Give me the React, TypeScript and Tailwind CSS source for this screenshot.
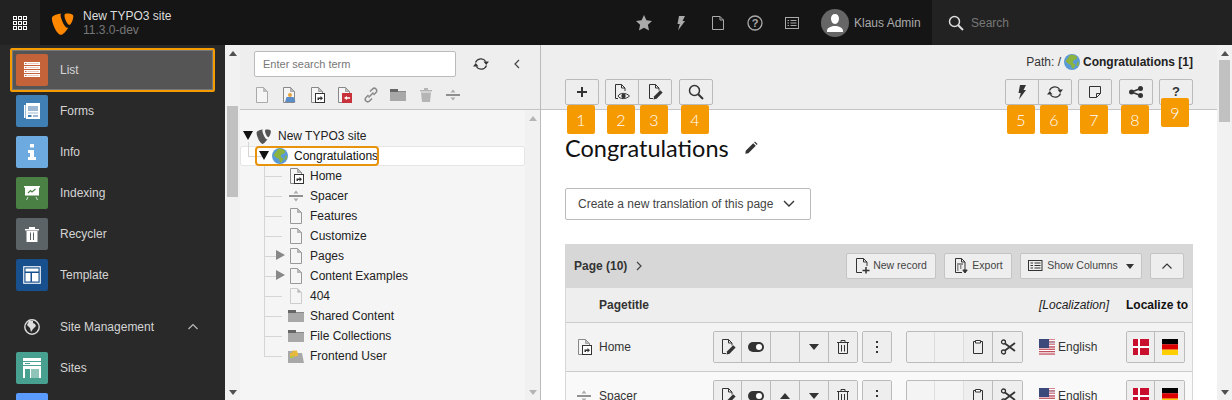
import React from "react";

const Doc = ({ c = "#888", fill = "#f5f5f5", children }: { c?: string; fill?: string; children?: React.ReactNode }) => (
  <svg width="16" height="16" viewBox="0 0 16 16" className="shrink-0">
    <path d="M2.500.5h7l4 4v11h-11z" fill={fill} stroke={c} />
    <path d="M9.500.5v4h4z" fill="#bbb" stroke={c} strokeWidth=".6" />
    {children}
  </svg>
);
const Shortcut = () => (
  <>
    <rect x="6.500" y="6.500" width="9" height="9" fill="#fff" stroke="#333" />
    <path d="M8.500 13v-2.500h3V9l2.500 2.200-2.500 2.200V12H10v1z" fill="#333" />
  </>
);
const Folder = ({ c = "#a8a8a8" }: { c?: string }) => (
  <svg width="16" height="16" viewBox="0 0 16 16" className="shrink-0">
    <path d="M0 4h16v10H0z" fill={c} />
    <path d="M0 2h8v1h0v2H0z" fill="#666" />
    <path d="M8 4h8v1H8z" fill="#8a8a8a" />
  </svg>
);
const Spacer = ({ c = "#666" }: { c?: string }) => (
  <svg width="16" height="16" viewBox="0 0 16 16" className="shrink-0">
    <path d="M1 8h14" stroke={c} strokeWidth="1.400" />
    <path d="M8 2.500l2.400 3H5.600zM8 13.500l2.400-3H5.600z" fill="#aaa" />
  </svg>
);
const Trash = ({ c = "#333", s = 16 }: { c?: string; s?: number }) => (
  <svg width={s} height={s} viewBox="0 0 16 16" fill="none" stroke={c}>
    <path d="M2 3.500h12M6 3.500v-2h4v2M3.500 3.500v11h9v-11M6.500 6v6.500M9.500 6v6.500" />
  </svg>
);
const Globe = () => (
  <svg width="16" height="16" viewBox="0 0 16 16" className="shrink-0">
    <circle cx="8" cy="8" r="8" fill="#5b9bd5" />
    <path d="M6 1C9 0 12 1.500 13.500 3.500l-1.500 2-2 .5-1.500 2 1.500 2 1.500.5-1.500 3.500-2 .5-1-3.500-2-1L3.500 9 1.500 7 4 4z" fill="#8db33f" />
    <path d="M13.500 7.500l1.500.5-.5 3.500-2 .5z" fill="#8db33f" />
  </svg>
);
const T3 = ({ c, s }: { c: string; s: number }) => (
  <svg width={s} height={s} viewBox="0 0 16 16" className="shrink-0">
    <path fill={c} d="M11.500 11.100c-.2.100-.4.100-.6.100-1.800 0-4.500-6.300-4.500-8.400 0-.8.200-1 .4-1.200C4.700 1.800 1.800 2.700.9 3.800c-.2.300-.3.700-.3 1.300 0 3.300 3.500 10.800 6 10.800 1.100 0 3.100-1.800 4.900-4.800M10.300 1.600c2.300 0 4.600.4 4.600 1.700 0 2.700-1.700 5.900-2.500 5.900-1.500 0-3.400-4.100-3.400-6.100 0-.9.300-1.500 1.300-1.500" />
  </svg>
);
const Tri = ({ d, c = "#555" }: { d: "up" | "down" | "right"; c?: string }) => {
  if (d === "up") return <svg width="8" height="5" viewBox="0 0 8 5"><path d="M4 0l4 5H0z" fill={c} /></svg>;
  if (d === "down") return <svg width="8" height="5" viewBox="0 0 8 5"><path d="M0 0h8L4 5z" fill={c} /></svg>;
  return <svg width="9" height="10" viewBox="0 0 9 10"><path d="M0 0l9 5-9 5z" fill={c} /></svg>;
};

const ModuleIcons: Record<string, React.ReactNode> = {
  List: (
    <svg width="16" height="16" viewBox="0 0 16 16">
      <path d="M0 0h16v3H0zM0 4h16v3H0zM0 8h16v3H0zM0 12h16v3H0z" fill="#fff" />
      <path d="M1 1h1.500v1H1zM1 5h1.500v1H1zM1 9h1.500v1H1zM1 13h1.500v1H1z" fill="#c4623a" />
      <path d="M3.500 1H15v1H3.500zM3.500 5H15v1H3.500zM3.500 9H15v1H3.500zM3.500 13H15v1H3.500z" fill="#e9c9bb" />
    </svg>
  ),
  Forms: (
    <svg width="16" height="16" viewBox="0 0 16 16">
      <path d="M0 2h1.500v13H0zM2 0h14v16H2z" fill="#fff" />
      <path d="M4 3h10v5H4z" fill="#9db8d2" />
      <path d="M4 9.500h10v1H4z" fill="#9db8d2" />
      <path d="M4 12h3.500v2H4z" fill="#3d7fb5" />
      <path d="M9 12h5v2H9z" fill="#9db8d2" />
    </svg>
  ),
  Info: (
    <svg width="16" height="16" viewBox="0 0 16 16">
      <path d="M6 0h4v3.500H6zM4 6h6v7h2v3H4v-3h2V9H4z" fill="#fff" />
    </svg>
  ),
  Indexing: (
    <svg width="16" height="16" viewBox="0 0 16 16">
      <path d="M0 1h16v1.500h-1v8H1v-8H0z" fill="#fff" />
      <path d="M4 8l2.500-2.500L8 7l3.500-3" stroke="#4a8044" strokeWidth="1.200" fill="none" />
      <path d="M4 12l-1.500 3M12 12l1.500 3" stroke="#cfe0cc" fill="none" />
    </svg>
  ),
  Recycler: (
    <svg width="16" height="16" viewBox="0 0 16 16">
      <path d="M1 3h14v1.500H1zM5 1h6v2H5zM2.500 5h11v11h-11z" fill="#fff" />
      <path d="M6 6.500h1V14H6zM9 6.500h1V14H9z" fill="#5c6367" />
    </svg>
  ),
  Template: (
    <svg width="18" height="18" viewBox="0 0 18 18">
      <rect x=".75" y=".75" width="16.500" height="16.500" fill="none" stroke="#fff" strokeWidth="1.100" />
      <path d="M2.500 2.500h13v3h-13zM2.500 7h5v8.500h-5zM9 7h6.500v8.500H9z" fill="#fff" />
    </svg>
  ),
  Sites: (
    <svg width="18" height="20" viewBox="0 0 18 20">
      <path d="M0 0h18v3H0zM0 4h18v3H0z" fill="#fff" />
      <path d="M2 5h5v1H2z" fill="#48a090" />
      <path d="M0 8h18v12H0z" fill="#fff" />
      <path d="M2 11h5v9H2z" fill="#48a090" />
      <path d="M8 11h8v9H8z" fill="#8fc4b9" />
    </svg>
  ),
};

const Module = ({ name, bg, active, hideLabel }: { name: string; bg: string; active?: boolean; hideLabel?: boolean }) => (
  <div className={`relative h-[41px] flex items-center pl-4 shrink-0 ${active ? "z-10" : ""}`}>
    {active && <div className="absolute left-[10px] top-[-1px] w-[205px] h-[44px] bg-[#555] border-2 border-[#f59c00] rounded-[2px] shadow-[inset_0_0_0_1px_#777]" />}
    <div className="relative w-8 h-8 rounded-[2px] flex items-center justify-center" style={{ background: bg }}>
      {ModuleIcons[name]}
    </div>
    {!hideLabel && <span className="relative ml-3 text-[12px] text-[#d5d5d5]">{name}</span>}
  </div>
);

const Scrollbar = ({ thumbTop, thumbH, dim }: { thumbTop?: number; thumbH?: number; dim?: boolean }) => (
  <div className="w-[15px] shrink-0 bg-[#f1f1f1] relative h-full">
    <div className="absolute left-[4px] top-[6px] flex"><Tri d="up" c={dim ? "#b5b5b5" : "#505050"} /></div>
    {thumbH && <div className="absolute left-[2px] w-[11px] bg-[#c1c1c1]" style={{ top: thumbTop, height: thumbH }} />}
    <div className="absolute left-[4px] bottom-[5px] flex"><Tri d="down" c={dim ? "#b5b5b5" : "#505050"} /></div>
  </div>
);

const TreeRow = ({ icon, label, arrow, last }: { icon: React.ReactNode; label: string; arrow?: boolean; last?: boolean }) => (
  <div className="relative h-5 flex items-center pl-[48px]">
    <div className="absolute left-[24px] top-0 w-px bg-[#d5d5d5]" style={{ height: last ? 10 : 20 }} />
    <div className="absolute left-[24px] top-[10px] w-[18px] h-px bg-[#d5d5d5]" />
    {arrow && <div className="absolute left-[36px] top-[4px] flex"><Tri d="right" c="#888" /></div>}
    {icon}
    <span className="ml-[6px] text-[12px] text-[#222]">{label}</span>
  </div>
);

const Badge = ({ n, up }: { n: number; up?: boolean }) => (
  <div className={`absolute left-[1px] w-[28px] h-[29px] bg-[#f59a00] rounded-[2px] text-white text-[16px] font-light flex items-center justify-center z-10 font-['Lato',sans-serif] ${up ? "top-[18px]" : "top-[25px]"}`}>{n}</div>
);

const Btn = ({ w = 34, n, up, cls = "", children }: { w?: number; n?: number; up?: boolean; cls?: string; children?: React.ReactNode }) => (
  <div className={`relative h-[26px] bg-[#eee] border border-[#bbb] rounded-[2px] flex items-center justify-center ${cls}`} style={{ width: w }}>
    {children}
    {n && <Badge n={n} up={up} />}
  </div>
);

const DocPen = () => (
  <svg width="16" height="16" viewBox="0 0 16 16" fill="none">
    <path d="M6 14.500H2.500V.5h6L12 4v2.500M8.500.5V4H12" stroke="#333" />
    <path d="M6.500 15.500l.7-3.200 6-6.100 2.400 2.400-6 6.100z" fill="#333" />
  </svg>
);
const DocEye = () => (
  <svg width="16" height="16" viewBox="0 0 16 16" fill="none">
    <path d="M4 14.500H1.500V.5h6L11 4v3M7.500.5V4H11" stroke="#333" />
    <path d="M4 12c2-3.500 8-3.500 11.500 0-3.500 3.500-9.500 3.500-11.500 0z" fill="#eee" stroke="#333" />
    <circle cx="9.500" cy="12" r="2.200" fill="#333" />
  </svg>
);
const Search = ({ c = "#333", s = 16 }: { c?: string; s?: number }) => (
  <svg width={s} height={s} viewBox="0 0 16 16" fill="none" stroke={c} strokeWidth="1.500">
    <circle cx="6.500" cy="6.500" r="5" />
    <path d="M10.200 10.200L15 15" strokeWidth="2" />
  </svg>
);
const Refresh = ({ c = "#333" }: { c?: string }) => (
  <svg width="16" height="16" viewBox="0 0 16 16" fill="none">
    <path d="M2.500 6.500A5.800 5.800 0 0 1 12.800 5.500M13.500 9.500A5.800 5.800 0 0 1 3.200 10.500" stroke={c} strokeWidth="1.200" />
    <path d="M10.500 5.500H16L13.200 9zM0 10.500H5.500L2.800 7z" fill={c} />
  </svg>
);
const Bolt = ({ c = "#333" }: { c?: string }) => (
  <svg width="16" height="16" viewBox="0 0 16 16"><path d="M6 1h6L9.500 6H12l-7 9.500L6.800 9H4.500z" fill={c} /></svg>
);

const Flag = ({ k }: { k: "us" | "dk" | "de" }) => {
  if (k === "us")
    return (
      <svg width="16" height="16" viewBox="0 0 16 16" className="shrink-0">
        <rect width="16" height="16" fill="#fff" />
        {[0, 2.400, 4.800, 7.200, 9.600, 12, 14.400].map((y) => <rect key={y} y={y} width="16" height="1.300" fill="#c1505e" />)}
        <rect width="16" height="9" fill="#3b4a7a" />
        <path d="M10 1h6v1.300h-6zM10 3.500h6v1.200h-6zM10 6h6v1.200h-6z" fill="#fff" />
        <path d="M10 0h6v1h-6zM10 2.300h6v1.200h-6zM10 4.700h6v1.300h-6zM10 7.200h6v1.800h-6z" fill="#d9848e" />
      </svg>
    );
  if (k === "dk")
    return (
      <svg width="16" height="16" viewBox="0 0 16 16" className="shrink-0">
        <rect width="16" height="16" fill="#c8102e" />
        <path d="M5 0h2v16H5zM0 7h16v2H0z" fill="#fff" />
      </svg>
    );
  return (
    <svg width="16" height="16" viewBox="0 0 16 16" className="shrink-0">
      <rect width="16" height="5.400" fill="#000" />
      <rect y="5.300" width="16" height="5.400" fill="#d00" />
      <rect y="10.600" width="16" height="5.400" fill="#ffce00" />
    </svg>
  );
};

const Cell = ({ children, cls = "" }: { children?: React.ReactNode; cls?: string }) => (
  <div className={`w-[29px] first:w-[28px] last:w-[28px] h-[30px] flex items-center justify-center bg-[#eee] border-r border-[#bbb] last:border-r-0 ${cls}`}>{children}</div>
);
const Group = ({ children, cls = "" }: { children: React.ReactNode; cls?: string }) => (
  <div className={`flex border border-[#bbb] rounded-[2px] overflow-hidden h-[32px] shrink-0 ${cls}`}>{children}</div>
);
const Toggle = () => (
  <svg width="16" height="10" viewBox="0 0 16 10"><rect width="16" height="10" rx="5" fill="#333" /><circle cx="11" cy="5" r="3" fill="#fff" /></svg>
);
const Dots = () => (
  <svg width="16" height="16" viewBox="0 0 16 16"><path d="M7 2h2v2H7zM7 7h2v2H7zM7 12h2v2H7z" fill="#333" /></svg>
);
const Clip = () => (
  <svg width="16" height="16" viewBox="0 0 16 16" fill="none" stroke="#333"><path d="M5.500 2.500h-2v12h9v-12h-2" /><path d="M5.500 1.500h5v2.500h-5z" fill="#fff" /></svg>
);
const Scissors = () => (
  <svg width="16" height="16" viewBox="0 0 16 16" fill="none" stroke="#333" strokeWidth="1.300">
    <circle cx="3.500" cy="3" r="2" /><circle cx="3.500" cy="13" r="2" />
    <path d="M5 4.500L15 12M5 11.500L15 4" strokeWidth="1.800" />
  </svg>
);

const Row = ({ icon, label, up, bg }: { icon: React.ReactNode; label: string; up?: boolean; bg: string }) => (
  <div className={`h-[49px] flex items-center border-b border-[#ccc] shrink-0 ${bg}`}>
    <div className="w-[33px] pl-[10px] flex shrink-0">{icon}</div>
    <div className="w-[114px] shrink-0 text-[12px] text-[#333]">{label}</div>
    <Group>
      <Cell><DocPen /></Cell>
      <Cell><Toggle /></Cell>
      <Cell>{up && <svg width="10" height="6" viewBox="0 0 10 6"><path d="M5 0l5 6H0z" fill="#333" /></svg>}</Cell>
      <Cell><svg width="10" height="6" viewBox="0 0 10 6"><path d="M0 0h10L5 6z" fill="#333" /></svg></Cell>
      <Cell><Trash /></Cell>
    </Group>
    <Group cls="ml-[4px]"><Cell><Dots /></Cell></Group>
    <Group cls="ml-[14px] [&>div:last-child]:w-[29px]">
      <Cell cls="opacity-40" />
      <Cell cls="opacity-40" />
      <Cell><Clip /></Cell>
      <Cell><Scissors /></Cell>
    </Group>
    <div className="ml-[16px] w-[87px] shrink-0 flex items-center text-[12px] text-[#333]">
      <Flag k="us" /><span className="ml-[3px]">English</span>
    </div>
    <Group cls="[&>div:last-child]:w-[29px]">
      <Cell><Flag k="dk" /></Cell>
      <Cell><Flag k="de" /></Cell>
    </Group>
  </div>
);

const PanelBtn = ({ w, children }: { w: number; children: React.ReactNode }) => (
  <div className="h-[26px] bg-[#eee] border border-[#c4c4c4] rounded-[2px] flex items-center justify-center text-[10.500px] text-[#444]" style={{ width: w }}>{children}</div>
);

export default function App() {
  return (
    <div className="w-[1232px] h-[400px] overflow-hidden flex flex-col font-['Liberation_Sans',Arial,sans-serif]">
      {/* Top bar */}
      <div className="h-[45px] shrink-0 flex bg-[#151515]">
        <div className="w-10 bg-[#222] flex items-center justify-center">
          <svg width="16" height="16" viewBox="0 0 16 16" fill="none" stroke="#fff">
            {[1, 6, 11].map((y) => [1, 6, 11].map((x) => <rect key={`${x}${y}`} x={x + 0.5} y={y + 0.5} width="3" height="3" />))}
          </svg>
        </div>
        <div className="flex items-center pl-[11px]">
          <T3 c="#ff8700" s={24} />
          <div className="ml-[8px] leading-[14px]">
            <div className="text-[12px] text-[#ddd]">New TYPO3 site</div>
            <div className="text-[12px] text-[#777]">11.3.0-dev</div>
          </div>
        </div>
        <div className="flex-1" />
        <div className="flex items-center gap-[21px] text-[#aaa]">
          <svg width="16" height="16" viewBox="0 0 16 16"><path d="M8 0l2.400 5.200 5.600.7-4.100 3.900 1.100 5.700L8 12.700l-5 2.800 1.100-5.700L0 5.900l5.600-.7z" fill="#aaa" /></svg>
          <Bolt c="#aaa" />
          <svg width="16" height="16" viewBox="0 0 16 16" fill="none" stroke="#aaa"><path d="M2.500 1.500h7.500l3.500 3.500v9.500h-11zM10 1.500V5h3.500" /></svg>
          <svg width="16" height="16" viewBox="0 0 16 16" fill="none"><circle cx="8" cy="8" r="7" stroke="#aaa" strokeWidth="1.300" /><text x="8" y="12" textAnchor="middle" fontSize="11" fontWeight="700" fill="#aaa" fontFamily="Liberation Sans">?</text></svg>
          <svg width="16" height="16" viewBox="0 0 16 16" fill="none" stroke="#aaa"><rect x="1.500" y="2.500" width="13" height="11" /><path d="M3.500 5.500h1.500M6.500 5.500h6M3.500 8h1.500M6.500 8h6M3.500 10.500h1.500M6.500 10.500h6" strokeWidth="1.200" /></svg>
        </div>
        <div className="ml-[21px] flex items-center w-[111px]">
          <div className="w-7 h-7 rounded-full bg-[#666] flex items-center justify-center overflow-hidden">
            <svg width="18" height="20" viewBox="0 0 18 20"><path d="M9 1c2.500 0 4 2 4 4.500S11.500 11 9 11 5 8 5 5.500 6.500 1 9 1zM1 18c0-3 3-4 6-5h4c3 1 6 2 6 5v1H1z" fill="#fff" /></svg>
          </div>
          <span className="ml-[5px] text-[12px] text-[#aaa]">Klaus Admin</span>
        </div>
        <div className="w-[300px] bg-[#222] flex items-center pl-4">
          <Search c="#ddd" />
          <span className="ml-[7px] text-[12px] text-[#777]">Search</span>
        </div>
      </div>

      <div className="flex-1 flex min-h-0">
        {/* Module menu */}
        <div className="w-[225px] bg-[#292929] pt-[4px] flex flex-col overflow-hidden shrink-0">
          <Module name="List" bg="#c4623a" active />
          <Module name="Forms" bg="#3f7fb3" />
          <Module name="Info" bg="#6daae0" />
          <Module name="Indexing" bg="#4a8044" />
          <Module name="Recycler" bg="#5c6367" />
          <Module name="Template" bg="#17508c" />
          <div className="h-[40px] mt-[12px] shrink-0 flex items-center pl-4 relative">
            <div className="w-8 flex justify-center">
              <svg width="16" height="16" viewBox="0 0 16 16"><circle cx="8" cy="8" r="7.200" fill="none" stroke="#ddd" strokeWidth="1.400" /><path d="M5 2L3 6l3 3 1 4 2-3 3-3-1-2-2-1V2z" fill="#ddd" /></svg>
            </div>
            <span className="ml-3 text-[12px] text-[#d5d5d5]">Site Management</span>
            <svg className="absolute left-[188px] top-[16px]" width="10" height="7" viewBox="0 0 10 7" fill="none" stroke="#bbb" strokeWidth="1.200"><path d="M.5 6L5 1.500 9.500 6" /></svg>
          </div>
          <Module name="Sites" bg="#48a090" />
          <Module name="Redirects" bg="#5a9bff" hideLabel />
        </div>
        <Scrollbar thumbTop={61} thumbH={91} />

        {/* Tree */}
        <div className="w-[300px] shrink-0 flex flex-col bg-[#f5f5f5] border-r border-[#bbb] box-content">
          <div className="h-[65px] shrink-0 bg-[#eee] border-b border-[#c4c4c4] pl-[14px] pt-[6px]">
            <div className="flex items-center">
              <div className="w-[202px] h-[26px] bg-white border border-[#bbb] rounded-[2px] flex items-center pl-[8px] text-[11px] text-[#777]">Enter search term</div>
              <div className="ml-[17px] flex"><Refresh /></div>
              <svg className="ml-[24px]" width="8" height="10" viewBox="0 0 8 10" fill="none" stroke="#444" strokeWidth="1.200"><path d="M6 1L2 5l4 4" /></svg>
            </div>
            <div className="flex gap-[11.300px] mt-[10px]">
              <Doc c="#aaa" fill="#f5f5f5" />
              <Doc c="#888"><circle cx="9" cy="8" r="2" fill="#e8a33c" /><path d="M4 15l1.500-5h7l2 5z" fill="#5a8cc7" /></Doc>
              <Doc c="#888"><Shortcut /></Doc>
              <Doc c="#888"><rect x="6" y="6" width="10" height="10" fill="#c8323a" /><path d="M14 10.200h-3V9l-3 2 3 2v-1.200h3z" fill="#fff" /></Doc>
              <svg width="16" height="16" viewBox="0 0 16 16" fill="none" stroke="#888" strokeWidth="1.500"><path d="M7 4.500l2.500-2.500c1-1 2.500-1 3.500 0s1 2.500 0 3.500L10.500 8M9 11.500L6.500 14c-1 1-2.500 1-3.500 0s-1-2.500 0-3.500L5.500 8M5.500 10.500l5-5" /></svg>
              <Folder />
              <svg width="16" height="16" viewBox="0 0 16 16"><path d="M2 3h12v1.500H2zM6 1h4v2H6zM3 5.500h10L12 15H4z" fill="#b5b5b5" /></svg>
              <Spacer />
            </div>
          </div>
          <div className="flex-1 flex min-h-0">
            <div className="flex-1 pt-[16px] min-w-0">
              <div className="relative h-5 flex items-center pl-[16px]">
                <svg className="absolute left-[3px] top-[5px]" width="10" height="9" viewBox="0 0 10 9"><path d="M0 0h10L5 9z" fill="#111" /></svg>
                <T3 c="#555" s={16} />
                <span className="ml-[6px] text-[12px] text-[#222]">New TYPO3 site</span>
              </div>
              <div className="relative h-5 flex items-center pl-[32px] bg-white rounded-[3px] shadow-[inset_0_0_0_1px_#e5e5e5]">
                <div className="absolute left-[8px] top-[-4px] w-px h-[14px] bg-[#d5d5d5]" />
                <div className="absolute left-[8px] top-[10px] w-[14px] h-px bg-[#d5d5d5]" />
                <div className="absolute left-[15px] top-0 w-[124px] h-5 border-2 border-[#e8930c] rounded-[4px]" />
                <svg className="absolute left-[19px] top-[5px]" width="10" height="9" viewBox="0 0 10 9"><path d="M0 0h10L5 9z" fill="#111" /></svg>
                <Globe />
                <span className="ml-[6px] text-[12px] text-[#111]">Congratulations</span>
              </div>
              <TreeRow icon={<Doc><Shortcut /></Doc>} label="Home" />
              <TreeRow icon={<Spacer />} label="Spacer" />
              <TreeRow icon={<Doc c="#999" />} label="Features" />
              <TreeRow icon={<Doc c="#999" />} label="Customize" />
              <TreeRow icon={<Doc c="#999" />} label="Pages" arrow />
              <TreeRow icon={<Doc c="#999" />} label="Content Examples" arrow />
              <TreeRow icon={<Doc c="#ccc" />} label="404" />
              <TreeRow icon={<Folder />} label="Shared Content" />
              <TreeRow icon={<Folder />} label="File Collections" />
              <TreeRow
                icon={
                  <svg width="16" height="16" viewBox="0 0 16 16" className="shrink-0">
                    <path d="M0 3h6l1 2h7l2 10H0z" fill="#a8a8a8" />
                    <path d="M2 9V5h2l1-3 2 1 1-1 1 1 1 3v2z" fill="#e8b93c" />
                    <path d="M2 9l3-2v3H2z" fill="#b5c93a" />
                  </svg>
                }
                label="Frontend User"
                last
              />
            </div>
            <Scrollbar dim />
          </div>
        </div>

        {/* Content */}
        <div className="flex-1 min-w-0 flex relative">
          <div className="flex-1 min-w-0 flex flex-col overflow-hidden">
            <div className="h-[65px] shrink-0 bg-[#eee] border-b border-[#c4c4c4] px-6">
              <div className="h-[34px] flex items-center justify-end text-[12px] text-[#333]">
                Path: /<span className="mx-[3px]"><Globe /></span><b className="text-[#222]">Congratulations [1]</b>
              </div>
              <div className="flex">
                <Btn n={1}><svg width="12" height="12" viewBox="0 0 12 12"><path d="M5 1h2v4h4v2H7v4H5V7H1V5h4z" fill="#333" /></svg></Btn>
                <div className="flex ml-[6px]">
                  <Btn n={2} cls="rounded-r-none"><DocEye /></Btn>
                  <Btn n={3} cls="rounded-l-none -ml-px"><DocPen /></Btn>
                </div>
                <Btn n={4} cls="ml-[7px]"><Search /></Btn>
                <div className="flex-1" />
                <div className="flex">
                  <Btn n={5} cls="rounded-r-none"><Bolt /></Btn>
                  <Btn n={6} cls="rounded-l-none -ml-px"><Refresh /></Btn>
                </div>
                <Btn n={7} cls="ml-[6px]">
                  <svg width="16" height="16" viewBox="0 0 16 16" fill="none" stroke="#333"><path d="M2.500 2.500h11v7l-4 4h-7zM13.500 9.500h-4v4" /></svg>
                </Btn>
                <Btn n={8} cls="ml-[7px]">
                  <svg width="16" height="16" viewBox="0 0 16 16"><circle cx="3.500" cy="8" r="2.500" fill="#333" /><circle cx="12.500" cy="4.500" r="2.500" fill="#333" /><circle cx="12.500" cy="11.500" r="2.500" fill="#333" /><path d="M3.500 8l9-3.500M3.500 8l9 3.500" stroke="#333" strokeWidth="1.500" /></svg>
                </Btn>
                <Btn n={9} up cls="ml-[6px] font-bold text-[#333] text-[13px]">?</Btn>
              </div>
            </div>
            <div className="px-6 bg-white flex-1 min-h-0">
              <div className="mt-[20px] h-[36px] flex items-center">
                <span className="text-[23.500px] leading-[36px] text-[#111] font-['Lato',sans-serif]">Congratulations</span>
                <svg className="ml-[15px]" width="14" height="14" viewBox="0 0 16 16"><path d="M2 11L10.500 2.500l3 3L5 14l-3.500.5zM11.500 1.500l1-1 3 3-1 1z" fill="#333" /></svg>
              </div>
              <div className="mt-[22px] w-[246px] h-[32px] bg-white border border-[#bbb] rounded-[2px] flex items-center pl-3 text-[12px] text-[#444] relative">
                Create a new translation of this page
                <svg className="absolute right-[15px] top-[11px]" width="12" height="8" viewBox="0 0 12 8" fill="none" stroke="#333" strokeWidth="1.400"><path d="M1 1l5 5 5-5" /></svg>
              </div>
              <div className="mt-[24px] border-x border-[#d7d7d7]">
                <div className="h-[44px] bg-[#d7d7d7] flex items-center pl-[8px] pr-[8px]">
                  <b className="text-[12px] text-[#333]">Page (10)</b>
                  <svg className="ml-[9px]" width="7" height="10" viewBox="0 0 7 10" fill="none" stroke="#444" strokeWidth="1.200"><path d="M1 1l4 4-4 4" /></svg>
                  <div className="flex-1" />
                  <PanelBtn w={90}>
                    <svg className="mr-[2px]" width="16" height="16" viewBox="0 0 16 16" fill="none" stroke="#333"><path d="M7 14.500H1.500V.5h7L12 4v4M8.500.5V4H12" /><path d="M11 9v6.500M7.500 12.500h7" strokeWidth="1.500" /></svg>
                    New record
                  </PanelBtn>
                  <div className="w-2" />
                  <PanelBtn w={68}>
                    <svg className="mr-[3px]" width="16" height="16" viewBox="0 0 16 16" fill="none" stroke="#333"><path d="M9 14.500H2.500V.5h6L12 4v4M8.500.5V4H12M4 6h6M4 8h1.500M7 8h1.500M4 10h1.500M7 10h1.500M4 12h1.500" /><path d="M12 8v6M9.800 12L12 15l2.200-3z" fill="#333" /></svg>
                    Export
                  </PanelBtn>
                  <div className="w-2" />
                  <PanelBtn w={122}>
                    <svg className="mr-[3px]" width="16" height="16" viewBox="0 0 16 16" fill="none" stroke="#333"><rect x=".5" y="2.500" width="13.500" height="10" /><path d="M2.500 5h2.500M6.500 5h6M2.500 7.500h2.500M6.500 7.500h6M2.500 10h2.500M6.500 10h6" /></svg>
                    Show Columns
                    <svg className="ml-[8px]" width="8" height="5" viewBox="0 0 8 5"><path d="M0 0h8L4 5z" fill="#333" /></svg>
                  </PanelBtn>
                  <div className="w-2" />
                  <PanelBtn w={34}>
                    <svg width="10" height="6" viewBox="0 0 10 6" fill="none" stroke="#333" strokeWidth="1.100"><path d="M.5 5.500L5 1l4.500 4.500" /></svg>
                  </PanelBtn>
                </div>
                <div className="h-[35px] bg-[#eee] border-b border-[#ccc] flex items-center text-[12px]">
                  <b className="ml-[33px] text-[#333]">Pagetitle</b>
                  <div className="flex-1" />
                  <i className="w-[87px] text-[#222]">[Localization]</i>
                  <b className="w-[66px] text-[#111] whitespace-nowrap">Localize to</b>
                </div>
                <Row icon={<Doc><Shortcut /></Doc>} label="Home" bg="bg-[#f3f3f3]" />
                <Row icon={<Spacer />} label="Spacer" up bg="bg-[#f9f9f9]" />
              </div>
            </div>
          </div>
          <Scrollbar thumbTop={15} thumbH={62} />
        </div>
      </div>
    </div>
  );
}
